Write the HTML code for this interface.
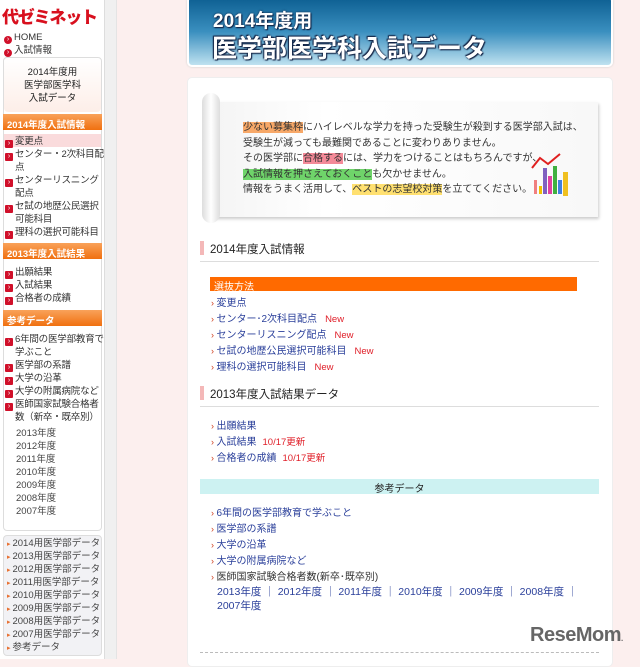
<!DOCTYPE html>
<html><head><meta charset="utf-8"><style>
*{margin:0;padding:0;box-sizing:border-box}
body{width:640px;height:659px;overflow:hidden;background:#fcefee;font-family:"Liberation Sans","Noto Sans CJK JP",sans-serif;position:relative;color:#333}
.a{position:absolute;white-space:nowrap}
#side{position:absolute;left:0;top:0;width:104px;height:659px;background:#fff}
#scroll{position:absolute;left:104px;top:0;width:13px;height:659px;background:#f0f0f0;border-left:1px solid #ddd;border-right:1px solid #e4e4e4}
.box{position:absolute;left:3px;width:99px;border:1px solid #ddd;border-radius:4px;background:#fff}
.oh{position:absolute;left:3px;width:99px;height:16px;background:linear-gradient(#f9a25a,#f07010);color:#fff;font-size:9.5px;font-weight:bold;padding:3px 0 0 4px;white-space:nowrap}
.si{position:absolute;left:5px;font-size:9.5px;line-height:13px;color:#333;white-space:nowrap;letter-spacing:-0.2px}
.ic{display:inline-block;width:8px;height:8px;background:#d0102a;border-radius:1px;margin-right:2px;vertical-align:-1px;color:#fff;font-size:7px;line-height:8px;text-align:center}
.ind{padding-left:10px}
.yl{position:absolute;left:16px;font-size:9.5px;color:#444}
.bl{position:absolute;left:7px;font-size:9.5px;color:#444;white-space:nowrap}
.bl:before{content:"▸ ";color:#e87030;font-size:7px}
.ml{position:absolute;font-size:10px;color:#2a3f9a;white-space:nowrap}
.ml:before{content:"› ";color:#d04020;font-size:9px}
.new{color:#e0202a;margin-left:8px;font-size:9.5px}
</style></head><body>
<div id="side">
 <div class="a" style="left:2px;top:3px;font-size:17px;font-weight:900;color:#d8101e;letter-spacing:-1.2px">代ゼミネット</div>
 <div class="a" style="left:4px;top:32px;font-size:9.5px;color:#333"><span class="ic" style="border-radius:50%">›</span>HOME</div>
 <div class="a" style="left:4px;top:42px;font-size:9.5px;color:#333"><span class="ic" style="border-radius:50%">›</span>入試情報</div>
 <div class="box" style="top:57px;height:474px"></div>
 <div class="a" style="left:4px;top:58px;width:97px;height:54px;background:linear-gradient(#fff,#fdeee8);border-radius:4px"></div>
 <div class="a" style="left:3px;top:66px;width:99px;text-align:center;font-size:9.5px;line-height:13px;color:#222">2014年度用<br>医学部医学科<br>入試データ</div>
 <div class="oh" style="top:114px">2014年度入試情報</div>
 <div class="a" style="left:4px;top:134px;width:97px;height:13px;background:#fadbdc"></div>
 <div class="si" style="top:135px"><span class="ic">›</span>変更点</div>
 <div class="si" style="top:148px"><span class="ic">›</span>センター・2次科目配<br><span class="ind">点</span></div>
 <div class="si" style="top:174px"><span class="ic">›</span>センターリスニング<br><span class="ind">配点</span></div>
 <div class="si" style="top:200px"><span class="ic">›</span>セ試の地歴公民選択<br><span class="ind">可能科目</span></div>
 <div class="si" style="top:226px"><span class="ic">›</span>理科の選択可能科目</div>
 <div class="oh" style="top:243px">2013年度入試結果</div>
 <div class="si" style="top:266px"><span class="ic">›</span>出願結果</div>
 <div class="si" style="top:279px"><span class="ic">›</span>入試結果</div>
 <div class="si" style="top:292px"><span class="ic">›</span>合格者の成績</div>
 <div class="oh" style="top:310px">参考データ</div>
 <div class="si" style="top:333px"><span class="ic">›</span>6年間の医学部教育で<br><span class="ind">学ぶこと</span></div>
 <div class="si" style="top:359px"><span class="ic">›</span>医学部の系譜</div>
 <div class="si" style="top:372px"><span class="ic">›</span>大学の沿革</div>
 <div class="si" style="top:385px"><span class="ic">›</span>大学の附属病院など</div>
 <div class="si" style="top:398px"><span class="ic">›</span>医師国家試験合格者<br><span class="ind">数（新卒・既卒別）</span></div>
 <div class="yl" style="top:425px">2013年度</div>
 <div class="yl" style="top:438px">2012年度</div>
 <div class="yl" style="top:451px">2011年度</div>
 <div class="yl" style="top:464px">2010年度</div>
 <div class="yl" style="top:477px">2009年度</div>
 <div class="yl" style="top:490px">2008年度</div>
 <div class="yl" style="top:503px">2007年度</div>
 <div class="box" style="top:535px;height:121px;background:#f2f2f5"></div>
 <div class="bl" style="top:535px">2014用医学部データ</div>
 <div class="bl" style="top:548px">2013用医学部データ</div>
 <div class="bl" style="top:561px">2012用医学部データ</div>
 <div class="bl" style="top:574px">2011用医学部データ</div>
 <div class="bl" style="top:587px">2010用医学部データ</div>
 <div class="bl" style="top:600px">2009用医学部データ</div>
 <div class="bl" style="top:613px">2008用医学部データ</div>
 <div class="bl" style="top:626px">2007用医学部データ</div>
 <div class="bl" style="top:639px">参考データ</div>
</div>
<div id="scroll"></div>
<div class="a" style="left:187px;top:-4px;width:426px;height:71px;border-radius:5px;background:linear-gradient(#0d5f92,#3a8fbf 50%,#bfe2f0);border:2px solid #fff;box-shadow:0 0 2px #ccc"></div>
<div class="a" style="left:213px;top:6px;font-size:19px;font-weight:bold;color:#fff;text-shadow:0 0 2px #124,1px 1px 1px #124">2014年度用</div>
<div class="a" style="left:212px;top:29px;font-size:25px;font-weight:bold;color:#fff;text-shadow:0 0 2px #124,1px 1px 1px #124,-1px -1px 1px #124">医学部医学科入試データ</div>
<div class="a" style="left:187px;top:77px;width:426px;height:590px;background:#fff;border-radius:5px;border:1px solid #eee"></div>
<div class="a" style="left:208px;top:102px;width:390px;height:115px;background:linear-gradient(90deg,#f4f4f4,#fff 30%,#f8f8f8);box-shadow:1px 2px 3px #ccc"></div>
<div class="a" style="left:202px;top:93px;width:18px;height:130px;border-radius:9px;background:linear-gradient(90deg,#ddd,#fff 50%,#ddd)"></div>
<div class="a" style="left:243px;top:120px;font-size:10px;line-height:15.5px;color:#333">
<span style="background:#f7a868">少ない募集枠</span>にハイレベルな学力を持った受験生が殺到する医学部入試は、<br>受験生が減っても最難関であることに変わりありません。<br>その医学部に<span style="background:#f48a98">合格する</span>には、学力をつけることはもちろんですが、<br><span style="background:#6fd46a">入試情報を押さえておくこと</span>も欠かせません。<br>情報をうまく活用して、<span style="background:#ffe070">ベストの志望校対策</span>を立ててください。</div>
<svg class="a" style="left:530px;top:150px" width="60" height="52"><polyline points="2,18 10,8 18,14 30,4" fill="none" stroke="#e02020" stroke-width="2"/><rect x="4" y="30" width="3" height="14" fill="#f08080"/><rect x="9" y="36" width="3" height="8" fill="#f0c000"/><rect x="13" y="18" width="4" height="26" fill="#8060c0"/><rect x="18" y="26" width="4" height="18" fill="#e040a0"/><rect x="23" y="16" width="4" height="28" fill="#40b040"/><rect x="28" y="30" width="4" height="14" fill="#4080e0"/><rect x="33" y="22" width="5" height="24" fill="#f0c020"/></svg>
<div class="a" style="left:200px;top:241px;width:4px;height:14px;background:#f4b8b8"></div>
<div class="a" style="left:210px;top:241px;font-size:11.5px;color:#222">2014年度入試情報</div>
<div class="a" style="left:200px;top:261px;width:399px;height:1px;background:#ddd"></div>
<div class="a" style="left:210px;top:277px;width:367px;height:14px;background:#ff6a00;color:#fff;font-size:10px;padding:1px 0 0 4px">選抜方法</div>
<div class="ml" style="left:211px;top:294px">変更点</div>
<div class="ml" style="left:211px;top:310px">センター･2次科目配点<span class="new">New</span></div>
<div class="ml" style="left:211px;top:326px">センターリスニング配点<span class="new">New</span></div>
<div class="ml" style="left:211px;top:342px">セ試の地歴公民選択可能科目<span class="new">New</span></div>
<div class="ml" style="left:211px;top:358px">理科の選択可能科目<span class="new">New</span></div>
<div class="a" style="left:200px;top:386px;width:4px;height:14px;background:#f4b8b8"></div>
<div class="a" style="left:210px;top:386px;font-size:11.5px;color:#222">2013年度入試結果データ</div>
<div class="a" style="left:200px;top:406px;width:399px;height:1px;background:#ddd"></div>
<div class="ml" style="left:211px;top:417px">出願結果</div>
<div class="ml" style="left:211px;top:433px">入試結果<span class="new" style="margin-left:6px">10/17更新</span></div>
<div class="ml" style="left:211px;top:449px">合格者の成績<span class="new" style="margin-left:6px">10/17更新</span></div>
<div class="a" style="left:200px;top:479px;width:399px;height:15px;background:#cdf2f2;text-align:center;font-size:10px;color:#222;padding-top:1px">参考データ</div>
<div class="ml" style="left:211px;top:504px">6年間の医学部教育で学ぶこと</div>
<div class="ml" style="left:211px;top:520px">医学部の系譜</div>
<div class="ml" style="left:211px;top:536px">大学の沿革</div>
<div class="ml" style="left:211px;top:552px">大学の附属病院など</div>
<div class="ml" style="left:211px;top:568px;color:#333">医師国家試験合格者数(新卒･既卒別)</div>
<div class="a" style="left:217px;top:584px;font-size:10.5px;color:#2a3f9a">2013年度 ｜ 2012年度 ｜ 2011年度 ｜ 2010年度 ｜ 2009年度 ｜ 2008年度 ｜</div>
<div class="a" style="left:217px;top:598px;font-size:10.5px;color:#2a3f9a">2007年度</div>
<div class="a" style="left:530px;top:624px;font-size:20px;font-weight:bold;color:#666;letter-spacing:-0.5px">ReseMom<span style="font-size:8px">.</span></div>
<div class="a" style="left:200px;top:652px;width:399px;height:1px;border-top:1px dashed #bbb"></div>
</body></html>
